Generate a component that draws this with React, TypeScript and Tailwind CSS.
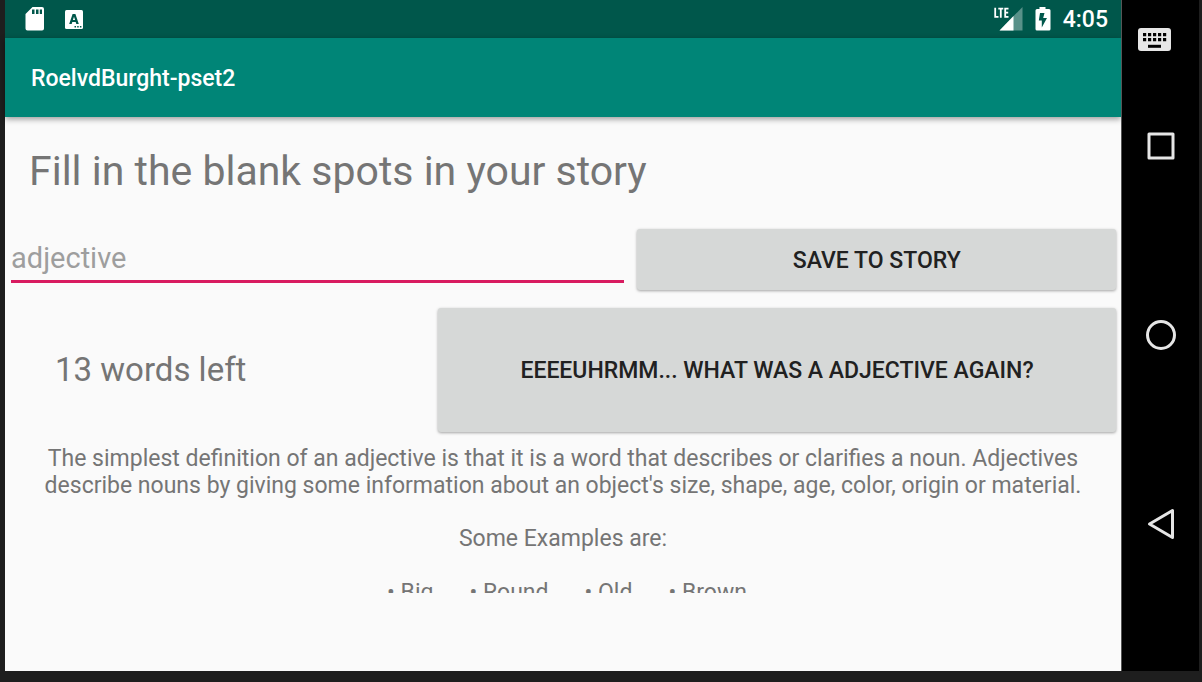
import type { ReactNode } from "react";

const examples = ["Big", "Round", "Old", "Brown"];

function StatusBar() {
  return (
    <div className="flex h-[38px] shrink-0 items-center justify-between bg-[#00574b] pl-5 pr-[13px] text-white">
      <div className="flex items-center gap-5">
        <svg width="20" height="24" viewBox="0 0 20 24" aria-hidden="true">
          <path
            fill="#fff"
            fillRule="evenodd"
            d="M7.500 0H17a2 2 0 0 1 2 2v19.500a2 2 0 0 1-2 2H2.500a2 2 0 0 1-2-2V7zM7 2.500V7h2.500V2.500zM11 2.500V7h2.500V2.500zM14.800 2.500V7H17V2.500z"
          />
        </svg>
        <svg width="18" height="19" viewBox="0 0 18 19" aria-hidden="true">
          <rect width="18" height="19" rx="1.500" fill="#fff" />
          <path
            fill="#00574b"
            fillRule="evenodd"
            d="M7.600 4h2.800L13.800 14h-2.500l-.6-2H7.300l-.6 2H4.200zM9 6.800 7.900 10h2.200z"
          />
          <path fill="#00574b" d="M9.500 16h1.500v1.500H9.500zM12.200 16h1.500v1.500h-1.500zM14.900 16h1.500v1.500h-1.500z" />
        </svg>
      </div>
      <div className="flex items-center">
        <svg width="30" height="24" viewBox="0 0 30 24" aria-label="LTE signal">
          <path fill="#fff" fillOpacity=".35" d="M29.500 0v23.500h-23z" />
          <path fill="#00574b" d="M0 0h15.500v12H0z" />
          <path fill="#fff" d="M20.500 9v14.500h-14z" />
          <path
            fill="none"
            stroke="#fff"
            strokeWidth="1.800"
            d="M2.200.8v9h3.300M5.300 1.700h5M7.800 1.700v9M15.500 1.700h-3.300v8.100h3.300M12.200 5.700h3"
          />
        </svg>
        <svg className="ml-3" width="16" height="24" viewBox="0 0 16 24" aria-label="Battery charging">
          <path
            fill="#fff"
            fillRule="evenodd"
            d="M4.500 0h6v2H14a1.500 1.500 0 0 1 1.500 1.500v18.500a1.500 1.500 0 0 1-1.500 1.500H2A1.500 1.500 0 0 1 .5 22V3.500A1.500 1.500 0 0 1 2 2h2.500zM9.500 6H5L3.800 13.500h3V20.500L12 11H8.200z"
          />
        </svg>
        <span className="ml-3 pt-[2px] text-[23px] font-medium leading-6">4:05</span>
      </div>
    </div>
  );
}

function NavButton({ label, children }: { label: string; children: ReactNode }) {
  return (
    <button type="button" aria-label={label} className="flex h-9 w-9 items-center justify-center">
      <svg width="36" height="36" viewBox="0 0 36 36" fill="none" stroke="#e6e6e6" strokeWidth="3" strokeLinejoin="round">
        {children}
      </svg>
    </button>
  );
}

function NavigationBar() {
  return (
    <nav className="flex w-[78px] shrink-0 flex-col items-center border-l border-[#555] bg-black pt-[22px]">
      <div className="mr-[14px]">
        <NavButton label="Keyboard">
          <rect x="2" y="6" width="33" height="23" rx="3" fill="#e6e6e6" stroke="none" />
          <path stroke="#000" strokeWidth="3.200" strokeDasharray="3.200 1.800" d="M7 12.600h23.200M7 17.600h23.200" />
          <path stroke="#000" strokeWidth="3" d="M12 24.300h13" />
        </NavButton>
      </div>
      <div className="mt-[70px] flex flex-col gap-[153px]">
        <NavButton label="Recent apps">
          <rect x="6" y="6" width="24" height="24" />
        </NavButton>
        <NavButton label="Home">
          <circle cx="18" cy="18" r="13.500" />
        </NavButton>
        <NavButton label="Back">
          <path d="M29.500 4.500v27L6.500 18z" />
        </NavButton>
      </div>
    </nav>
  );
}

const raised =
  "rounded-[3px] bg-[#d6d8d7] pt-[3px] text-[23px] font-medium uppercase text-[#212121] shadow-[0_1px_3px_rgba(0,0,0,0.35)]";

export default function App() {
  return (
    <div className="flex min-h-screen bg-[#1e1e1e] pb-[11px] pl-[5px] pr-[3px] font-['Roboto',sans-serif]">
      <div className="flex min-w-0 flex-1 flex-col bg-[#fafafa]">
        <StatusBar />
        <header className="flex h-[79px] shrink-0 items-center bg-[#008577] px-[26px] pt-[2px] shadow-[0_2px_6px_rgba(0,0,0,0.4)]">
          <span className="text-[23px] font-medium leading-7 text-white">RoelvdBurght-pset2</span>
        </header>
        <main className="flex flex-col pt-[30px] text-[#757575]">
          <h1 className="px-6 text-[41px] leading-[48px]">Fill in the blank spots in your story</h1>
          <form className="mt-[34px] flex gap-[13px] pl-[6px] pr-[5px]" onSubmit={(e) => e.preventDefault()}>
            <input
              type="text"
              aria-label="Word"
              placeholder="adjective"
              className="mb-[7px] h-[54px] min-w-0 flex-[614] border-b-[3px] border-[#d81b60] bg-transparent pt-[6px] text-[29px] text-[#212121] outline-none placeholder:text-[#9e9e9e]"
            />
            <button type="submit" className={`${raised} h-[61px] min-w-0 flex-[479]`}>
              Save to story
            </button>
          </form>
          <div className="mt-[18px] flex items-center pl-[6px] pr-[5px]">
            <div className="min-w-0 flex-[427]">
              <p className="pl-11 text-[33px] leading-10">13 words left</p>
            </div>
            <button type="button" className={`${raised} h-[124px] min-w-0 flex-[678]`}>
              Eeeeuhrmm... what was a adjective again?
            </button>
          </div>
          <section className="mt-[13px] h-[148px] overflow-hidden px-8 text-center text-[23px] leading-[27px]">
            <p>
              The simplest definition of an adjective is that it is a word that describes or clarifies a noun. Adjectives
              describe nouns by giving some information about an object's size, shape, age, color, origin or material.
            </p>
            <p className="mt-[26px]">Some Examples are:</p>
            <ul className="mt-[27px] flex justify-center gap-9 pl-2">
              {examples.map((word) => (
                <li key={word}>• {word}</li>
              ))}
            </ul>
          </section>
        </main>
      </div>
      <NavigationBar />
    </div>
  );
}
